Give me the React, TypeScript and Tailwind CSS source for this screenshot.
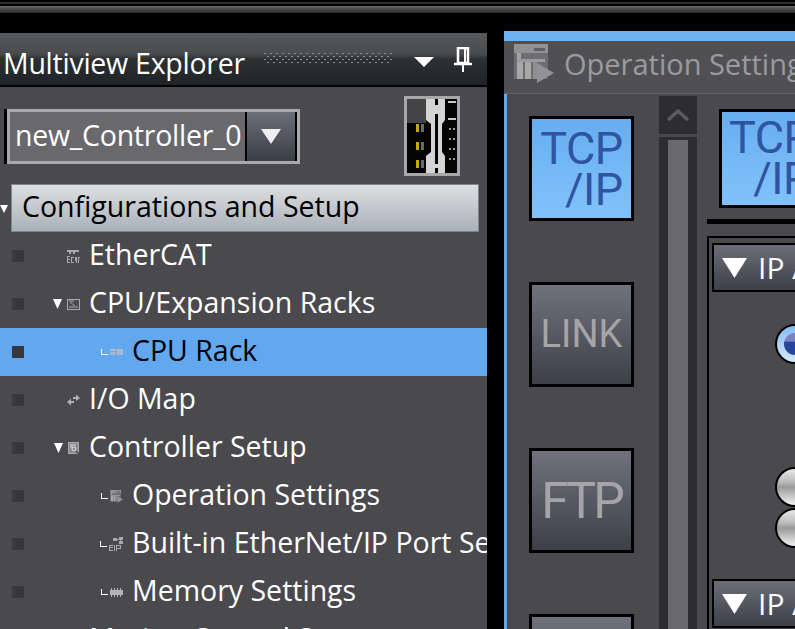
import type { ReactNode } from "react";

const font = { fontFamily: '"Open Sans", "Noto Sans", sans-serif' };

function Triangle({ className }: { className: string }) {
  return (
    <svg viewBox="0 0 10 10" preserveAspectRatio="none" className={className}>
      <path d="M0 0H10L5 10Z" fill="currentColor" />
    </svg>
  );
}

function EcatIcon() {
  return (
    <svg width="14" height="14" viewBox="0 0 14 14" fill="#a9a9a9">
      <path d="M1 1h12v2H9v2H7V3H5v2H3V3H1z" />
      <path d="M1 7h3v1H2v2h2v1H2v2h2v1H1zM5 8h3v1H6v4h2v1H5zM9 8h2v6h-1v-2H9zM12 8h2v1h-1v5h-1z" />
    </svg>
  );
}

function RackSmallIcon() {
  return (
    <svg width="13" height="11" viewBox="0 0 13 11" fill="none">
      <rect x="0.5" y="0.5" width="12" height="10" stroke="#a9a9a9" />
      <path d="M2 2h5M3 3l5 4M2 8h9" stroke="#a9a9a9" />
    </svg>
  );
}

function CpuRackIcon() {
  return (
    <svg width="13" height="6" viewBox="0 0 13 6" fill="#b8bcc4">
      <rect x="0" y="0" width="6" height="2" />
      <rect x="0" y="3" width="6" height="3" opacity="0.7" />
      <rect x="7" y="0" width="6" height="6" opacity="0.85" />
    </svg>
  );
}

function ArrowsIcon() {
  return (
    <svg width="13" height="12" viewBox="0 0 13 12" fill="#b0b0b0">
      <path d="M6 3h3V0.5L13 4l-4 3V5H6z" />
      <path d="M7 7H4V4.5L0 8l4 3.500V9h3z" />
    </svg>
  );
}

function SetupIcon() {
  return (
    <svg width="12" height="13" viewBox="0 0 12 13" fill="none">
      <rect x="0.5" y="0.5" width="10" height="11" fill="#8a8a8a" stroke="#a9a9a9" />
      <path d="M2 3h6M2 5h3" stroke="#dedede" />
      <circle cx="6" cy="7" r="2" stroke="#dedede" />
      <path d="M8 9l3.500 3.500" stroke="#444" strokeWidth="1.500" />
    </svg>
  );
}

function OperationIcon({ size }: { size: number }) {
  return (
    <svg width={size} height={size} viewBox="0 0 40 40" className="shrink-0">
      <rect x="0" y="0" width="34" height="35" fill="#6e6e70" />
      <rect x="0" y="0" width="34" height="9" fill="#929294" />
      <rect x="3" y="9" width="4" height="6" fill="#a4a4a6" />
      <rect x="20" y="4" width="11" height="3" fill="#5f5f61" />
      <rect x="3" y="15" width="28" height="3" fill="#9a9a9c" />
      <rect x="3" y="18" width="6" height="17" fill="#a8a8a8" />
      <rect x="11" y="18" width="6" height="17" fill="#a8a8a8" />
      <rect x="19" y="18" width="4" height="17" fill="#8e8e90" />
      <path d="M23 19L40 29L23 39Z" fill="#929294" />
    </svg>
  );
}

function EipIcon() {
  return (
    <svg width="14" height="15" viewBox="0 0 14 15" fill="#a9a9a9">
      <rect x="4" y="1" width="4" height="3" />
      <rect x="10" y="0" width="4" height="3" />
      <rect x="10" y="4" width="4" height="3" />
      <path d="M8 2h2v1H8zM11 3h1v1h-1z" />
      <path d="M0 8h4v1H1v1h3v1H1v2h3v1H0zM5 8h1v6H5zM7 8h5v4H8v2H7zM8 9v2h3V9z" />
    </svg>
  );
}

function MemoryIcon() {
  return (
    <svg width="13" height="9" viewBox="0 0 13 9" fill="#b4b4b4">
      <rect x="0" y="2" width="13" height="5" />
      <path d="M1 0h1v9H1zM4 0h1v9H4zM7 0h1v9H7zM10 0h1v9h-1z" />
    </svg>
  );
}

function Elbow() {
  return <span className="mr-[2px] block h-[6px] w-[7px] border-b border-l border-white" />;
}

type Row = {
  label: string;
  depth: 1 | 2;
  icon: ReactNode;
  open?: boolean;
  selected?: boolean;
};

const ROWS: Row[] = [
  { label: "EtherCAT", depth: 1, icon: <EcatIcon /> },
  { label: "CPU/Expansion Racks", depth: 1, icon: <RackSmallIcon />, open: true },
  { label: "CPU Rack", depth: 2, icon: <CpuRackIcon />, selected: true },
  { label: "I/O Map", depth: 1, icon: <ArrowsIcon /> },
  { label: "Controller Setup", depth: 1, icon: <SetupIcon />, open: true },
  { label: "Operation Settings", depth: 2, icon: <OperationIcon size={13} /> },
  { label: "Built-in EtherNet/IP Port Settings", depth: 2, icon: <EipIcon /> },
  { label: "Memory Settings", depth: 2, icon: <MemoryIcon /> },
  { label: "Motion Control Setup", depth: 1, icon: null, open: true },
];

function TreeRow({ row }: { row: Row }) {
  return (
    <div
      className={`flex h-[48px] shrink-0 items-center whitespace-nowrap text-[28.5px] ${
        row.selected ? "bg-[#62a8ee] text-black" : "text-white"
      }`}
    >
      <span className="ml-[12px] h-[12px] w-[12px] shrink-0 bg-[#38373d]" />
      {row.depth === 1 ? (
        <div className="ml-[17px] flex w-[48px] shrink-0 items-center justify-end gap-[5px] pr-[9px]">
          {row.open && <Triangle className="h-[10px] w-[9px] text-white" />}
          {row.icon}
        </div>
      ) : (
        <div className="ml-[64px] flex w-[44px] shrink-0 items-center justify-end pr-[9px]">
          <Elbow />
          {row.icon}
        </div>
      )}
      <span className="mb-[4px]">{row.label}</span>
    </div>
  );
}

function RackThumb() {
  return (
    <svg width="56" height="80" viewBox="0 0 56 80" className="shrink-0">
      <rect x="0" y="0" width="56" height="80" fill="#a8a8a8" />
      <rect x="3" y="3" width="50" height="74" fill="#050505" />
      <rect x="3" y="3" width="19" height="24" fill="#444446" />
      <path d="M22 3H41V24L38 28V56L41 60V77H22V60L27 56V28L22 24Z" fill="#d4d4d4" />
      <rect x="31" y="18" width="3" height="50" fill="#050505" />
      <rect x="31" y="3" width="3" height="6" fill="#050505" />
      <rect x="31" y="72" width="3" height="5" fill="#050505" />
      {[31, 49, 67].map((y) => (
        <g key={y}>
          <rect x="12" y={y - 3} width="3" height="8" fill="#c5a90b" />
          <rect x="17" y={y - 3} width="3" height="8" fill="#6a6a6a" />
        </g>
      ))}
      <rect x="44" y="5" width="8" height="2" fill="#c8c8c8" />
      <rect x="44" y="22" width="8" height="2" fill="#c8c8c8" />
      {[32, 42, 52, 62].map((y) => (
        <g key={y}>
          <rect x="45" y={y} width="2" height="2" fill="#9a9a9a" />
          <rect x="49" y={y} width="2" height="2" fill="#9a9a9a" />
        </g>
      ))}
    </svg>
  );
}

function GripDots() {
  return (
    <svg width="129" height="14" viewBox="0 0 129 14" className="shrink-0">
      {Array.from({ length: 22 }).map((_, i) => (
        <g key={i} fill="#8d8f91">
          <rect x={i * 6} y="1" width="2" height="1" />
          <rect x={i * 6 + 3} y="4" width="2" height="1" />
          <rect x={i * 6} y="7" width="2" height="1" />
          <rect x={i * 6 + 3} y="10" width="2" height="1" />
        </g>
      ))}
    </svg>
  );
}

function PinIcon() {
  return (
    <svg width="18" height="25" viewBox="0 0 18 25" fill="none" className="shrink-0">
      <path d="M4 1H14V16H4Z" stroke="#fff" strokeWidth="2.500" />
      <path d="M11 2V15" stroke="#fff" strokeWidth="2" />
      <path d="M0 17H18" stroke="#fff" strokeWidth="2.500" />
      <path d="M9 17V25" stroke="#fff" strokeWidth="2" />
    </svg>
  );
}

function LeftPanel() {
  return (
    <div className="flex h-full w-[487px] shrink-0 flex-col overflow-hidden bg-[#4a494e]" style={font}>
      <div className="flex h-[54px] shrink-0 items-center border-b-2 border-black bg-[linear-gradient(to_bottom,#58595b_0%,#4a4b4d_40%,#2c3033_50%,#202325_100%)] pl-[3px]">
        <span className="mt-[9px] w-[261px] shrink-0 whitespace-nowrap text-[28.5px] tracking-[-0.25px] text-white">
          Multiview Explorer
        </span>
        <GripDots />
        <Triangle className="ml-[21px] mt-[5px] h-[10px] w-[20px] shrink-0 text-white" />
        <div className="ml-[20px]">
          <PinIcon />
        </div>
      </div>

      <div className="flex h-[97px] shrink-0 pl-[4px]">
        <div className="mt-[22px] flex h-[55px] w-[296px] shrink-0 border-l-[3px] border-black">
          <div className="flex min-w-0 flex-1 border-[3px] border-[#a9a9a9]">
            <div className="min-w-0 flex-1 whitespace-nowrap bg-[#69696d] pl-[5px] text-[28.5px] leading-[46px] tracking-[-0.25px] text-white">
              new_Controller_0
            </div>
            <div className="flex w-[52px] shrink-0 items-center justify-center border-x-2 border-black bg-[linear-gradient(to_bottom,#6c6d78,#3c3e46)]">
              <Triangle className="h-[15px] w-[20px] text-[#eeeeee]" />
            </div>
          </div>
        </div>
        <div className="ml-[104px] mt-[9px]">
          <RackThumb />
        </div>
      </div>

      <div className="relative ml-[11px] flex h-[48px] w-[468px] shrink-0 items-center whitespace-nowrap border border-[#7f878e] bg-[linear-gradient(to_bottom,#dddfe1,#a9b1b9)] pb-[4px] pl-[10px] text-[28.5px] text-black">
        Configurations and Setup
        <Triangle className="absolute left-[-12px] top-[20px] h-[8px] w-[8px] text-white" />
      </div>

      {ROWS.map((row) => (
        <TreeRow key={row.label} row={row} />
      ))}
    </div>
  );
}

function TechLabel({ lines, active, className }: { lines: string[]; active?: boolean; className: string }) {
  return (
    <div
      className={`text-right font-normal ${className} ${active ? "text-[#30549f]" : "text-[#a5a5a8]"}`}
      style={{ fontFamily: '"Roboto", sans-serif' }}
    >
      {lines.map((l) => (
        <div key={l}>{l}</div>
      ))}
    </div>
  );
}

function SideButton({ lines, active, className }: { lines: string[]; active?: boolean; className: string }) {
  return (
    <div
      className={`flex h-[105px] w-[105px] shrink-0 items-center justify-center border-[3px] border-black ${
        active
          ? "bg-[linear-gradient(to_bottom,#66aef0,#82c2fb)]"
          : "bg-[linear-gradient(to_bottom,#70717c,#3e4048)]"
      }`}
    >
      <TechLabel lines={lines} active={active} className={className} />
    </div>
  );
}

function SectionHead() {
  return (
    <div className="flex h-[49px] shrink-0 items-center border-2 border-black bg-[linear-gradient(to_bottom,#6c6d78,#3e4048)] pl-[8px] text-[30px] text-white">
      <Triangle className="h-[20px] w-[25px] shrink-0 text-white" />
      <span className="ml-[11px] whitespace-nowrap">IP Address</span>
    </div>
  );
}

function Radio({ checked }: { checked?: boolean }) {
  if (checked) {
    return (
      <div className="h-[40px] w-[40px] shrink-0 rounded-full border-2 border-black bg-[linear-gradient(to_bottom,#86bbf0,#d2eafd)] p-[7px]">
        <div className="h-[22px] w-[22px] rounded-full bg-[linear-gradient(to_bottom,#7d83c4_0%,#7d83c4_38%,#27449c_40%,#27449c_100%)]" />
      </div>
    );
  }
  return (
    <div className="h-[40px] w-[40px] shrink-0 rounded-full border-2 border-black bg-[linear-gradient(to_bottom,#e8e8e8_0%,#bdbdbd_35%,#9a9a9a_50%,#f2f2f2_100%)]" />
  );
}

function RightPanel() {
  return (
    <div className="flex h-[598px] w-[291px] shrink-0 flex-col overflow-hidden" style={font}>
      <div className="h-[10px] shrink-0 bg-[#6cb4f2]" />
      <div className="flex h-[53px] shrink-0 items-center border-b border-[#5e6569] bg-[#505054] pb-[7px] pl-[10px]">
        <OperationIcon size={40} />
        <span className="ml-[10px] whitespace-nowrap text-[29px] text-[#9b9b9e]">
          Operation Settings
        </span>
      </div>
      <div className="flex min-h-0 flex-1 border-l-[3px] border-[#62a8ee] bg-[#4a494e]">
        <div className="flex w-[152px] shrink-0 flex-col gap-[61px] pl-[22px] pt-[22px]">
          <SideButton lines={["TCP", "/IP"]} active className="text-[45px] leading-[41px] tracking-[-0.5px]" />
          <SideButton lines={["LINK"]} className="text-[38px] leading-[41px]" />
          <SideButton lines={["FTP"]} className="text-[50px] leading-[50px] tracking-[-3px]" />
          <SideButton lines={["USB"]} className="text-[45px] leading-[41px]" />
        </div>
        <div className="flex w-[38px] shrink-0 flex-col gap-[3px] pt-[2px]">
          <div className="flex h-[38px] shrink-0 items-center justify-center bg-[#2d2d2f]">
            <svg width="24" height="14" viewBox="0 0 24 14" fill="none">
              <path d="M2 12L12 3L22 12" stroke="#5c5c5e" strokeWidth="3.500" />
            </svg>
          </div>
          <div className="flex-1 bg-[#2d2d2f] px-[9px] pt-[3px]">
            <div className="h-full bg-[#69696b]" />
          </div>
        </div>
        <div className="w-[98px] shrink-0 pl-[10px]">
          <div className="ml-[12px] mt-[15px] flex h-[99px] w-[200px] border-[3px] border-black bg-[linear-gradient(to_bottom,#66aef0,#82c2fb)] pl-[7px] pt-[5px]">
            <div className="w-[82px]">
              <TechLabel lines={["TCP", "/IP"]} active className="text-[45px] leading-[41px] tracking-[-0.5px]" />
            </div>
          </div>
          <div className="mt-[11px] h-[5px] w-[200px] bg-black" />
          <div className="mt-[12px] flex h-[400px] w-[200px] flex-col border-l-2 border-t-2 border-black pl-[3px] pt-[5px]">
            <SectionHead />
            <div className="ml-[63px] mt-[32px]">
              <Radio checked />
            </div>
            <div className="ml-[63px] mt-[103px] flex flex-col gap-[1px]">
              <Radio />
              <Radio />
            </div>
            <div className="mt-[31px]">
              <SectionHead />
            </div>
          </div>
        </div>
      </div>
    </div>
  );
}

export default function App() {
  return (
    <div className="flex h-[629px] w-[795px] flex-col overflow-hidden bg-black">
      <div className="h-[33px] shrink-0 pt-[2px]">
        <div className="h-[2px] bg-[#2d2d2d]" />
        <div className="mt-[2px] h-[7px] bg-[linear-gradient(to_bottom,#6a6a6a,#454545,#2a2a2a)]" />
      </div>
      <div className="flex min-h-0 flex-1 items-start">
        <LeftPanel />
        <div className="w-[17px] shrink-0" />
        <div className="mt-[-2px]">
          <RightPanel />
        </div>
      </div>
    </div>
  );
}
